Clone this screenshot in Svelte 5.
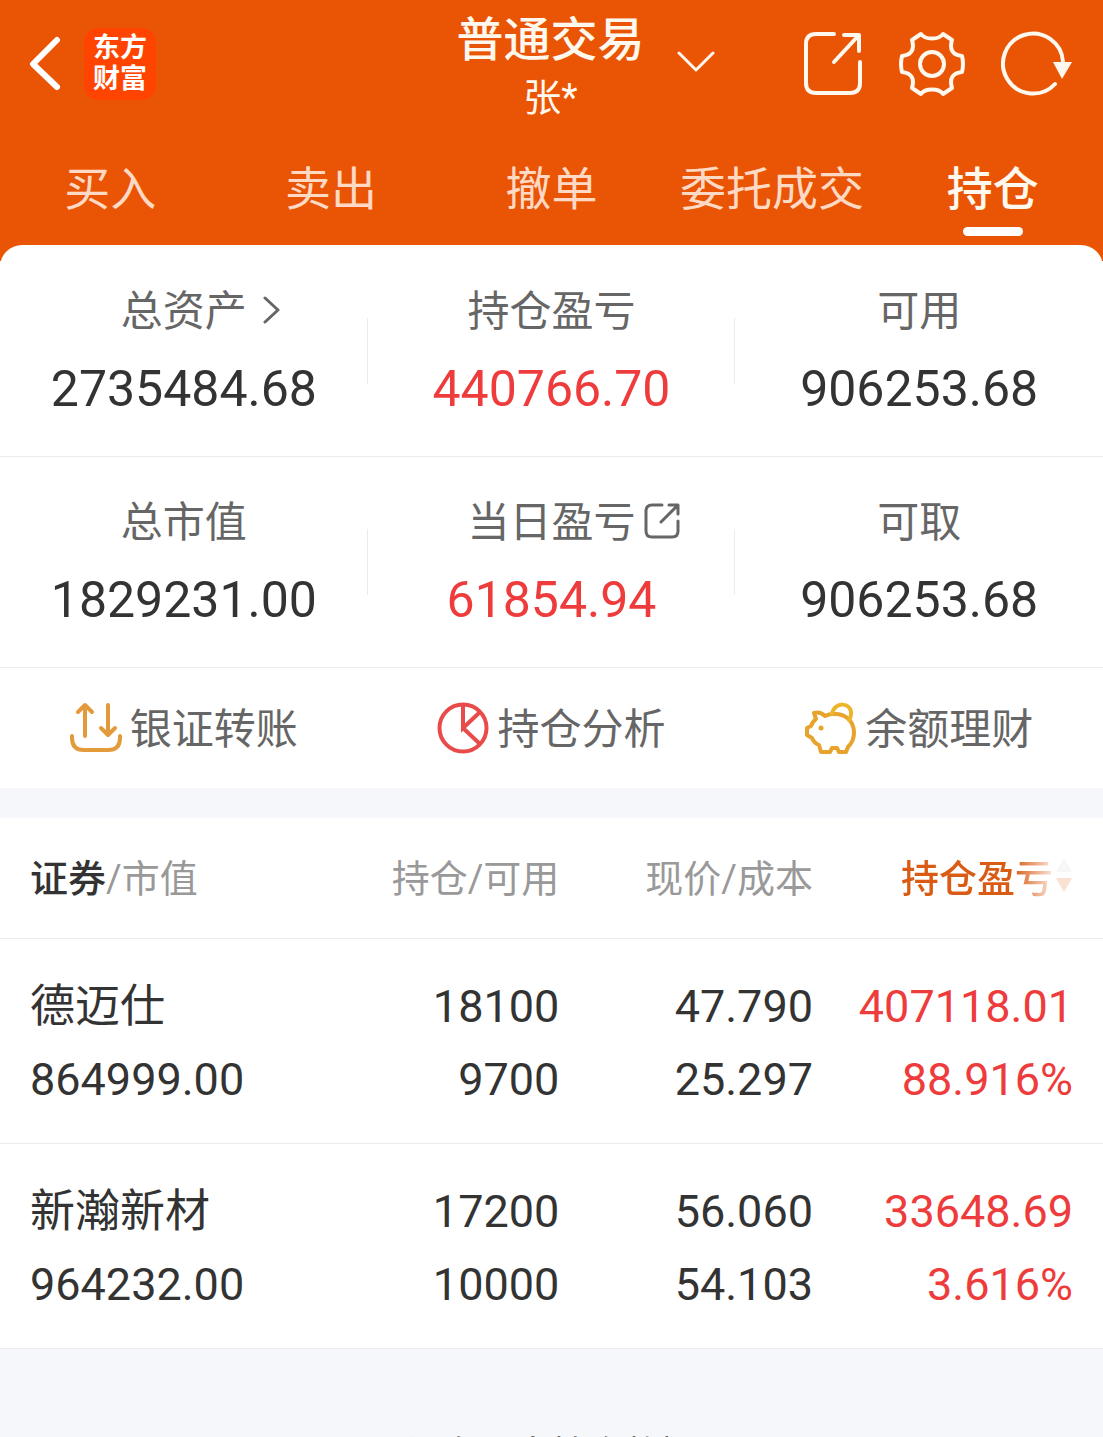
<script lang="ts">
  type Row = { name: string; value: string; held: string; usable: string; price: string; cost: string; profit: string; rate: string };

  const tabs = ['买入', '卖出', '撤单', '委托成交', '持仓'];
  let activeTab = $state('持仓');

  const summary = [
    [
      { label: '总资产', value: '2735484.68', icon: 'chevron', up: false },
      { label: '持仓盈亏', value: '440766.70', icon: '', up: true },
      { label: '可用', value: '906253.68', icon: '', up: false },
    ],
    [
      { label: '总市值', value: '1829231.00', icon: '', up: false },
      { label: '当日盈亏', value: '61854.94', icon: 'share', up: true },
      { label: '可取', value: '906253.68', icon: '', up: false },
    ],
  ];

  const rows: Row[] = [
    { name: '德迈仕', value: '864999.00', held: '18100', usable: '9700', price: '47.790', cost: '25.297', profit: '407118.01', rate: '88.916%' },
    { name: '新瀚新材', value: '964232.00', held: '17200', usable: '10000', price: '56.060', cost: '54.103', profit: '33648.69', rate: '3.616%' },
  ];
</script>

<div class="page">
  <header>
    <div class="bar">
      <div class="left">
        <button class="back" aria-label="返回">
          <svg viewBox="0 0 34 56" fill="none" stroke="#fff" stroke-width="6" stroke-linecap="round" stroke-linejoin="round">
            <path d="M29 4L5 28L29 51" />
          </svg>
        </button>
        <div class="logo"><span>东方</span><span>财富</span></div>
      </div>
      <button class="account">
        <span class="names">
          <span class="title">普通交易</span>
          <span class="user">张*</span>
        </span>
        <svg class="down" viewBox="0 0 38 24" fill="none" stroke="currentColor" stroke-width="3" stroke-linecap="round" stroke-linejoin="round">
          <path d="M2 3L19 20L36 3" />
        </svg>
      </button>
      <div class="tools">
        <button class="share" aria-label="分享">
          <svg viewBox="0 0 60 66" fill="none" stroke="currentColor" stroke-width="4" stroke-linecap="round" stroke-linejoin="round">
            <path d="M31 3H13Q3 3 3 13V52Q3 62 13 62H47Q57 62 57 52V31" />
            <path d="M41 4H56V20M56 4L31 31" />
          </svg>
        </button>
        <button class="gear" aria-label="设置">
          <svg viewBox="-34 -34 68 68" fill="none" stroke="currentColor" stroke-width="4" stroke-linejoin="round">
            <path d="M-11 -30C-7 -24 7 -24 11 -30L20 -24C17 -14 21 -9 30 -8Q32 0 30 8C21 9 17 14 20 24L11 30C7 24 -7 24 -11 30L-20 24C-17 14 -21 9 -30 8Q-32 0 -30 -8C-21 -9 -17 -14 -20 -24Z" />
            <circle r="12" />
          </svg>
        </button>
        <button class="refresh" aria-label="刷新">
          <svg viewBox="0 0 72 66" fill="none" stroke="currentColor" stroke-width="4" stroke-linecap="round">
            <path d="M54 53A30 30 0 1 1 62 31" />
            <path d="M52 31H71L61 48Z" fill="currentColor" stroke="none" />
          </svg>
        </button>
      </div>
    </div>
    <nav>
      {#each tabs as tab}
        <button class:active={tab === activeTab} onclick={() => (activeTab = tab)}>{tab}</button>
      {/each}
    </nav>
  </header>

  <main>
    {#each summary as line}
      <section class="summary">
        {#each line as item}
          <div class="cell">
            <div class="label">
              {item.label}
              {#if item.icon === 'chevron'}
                <svg class="more" viewBox="0 0 18 30" fill="none" stroke="currentColor" stroke-width="3" stroke-linecap="round" stroke-linejoin="round">
                  <path d="M2 3L15 15L2 27" />
                </svg>
              {:else if item.icon === 'share'}
                <svg class="detail" viewBox="0 0 36 36" fill="none" stroke="currentColor" stroke-width="3" stroke-linecap="round" stroke-linejoin="round">
                  <path d="M18 2H8Q2 2 2 8V28Q2 34 8 34H28Q34 34 34 28V18" />
                  <path d="M25 2H34V11M33 3L17 19" />
                </svg>
              {/if}
            </div>
            <div class="value" class:up={item.up}>{item.value}</div>
          </div>
        {/each}
      </section>
    {/each}

    <section class="actions">
      <button>
        <svg viewBox="0 0 52 52" fill="none" stroke="#e39a3b" stroke-width="4" stroke-linecap="round" stroke-linejoin="round">
          <path d="M15 34V3M8 10L15 3L22 10M38 3V32M31 26L38 33L45 26" />
          <path d="M2 34V36Q2 48 14 48H38Q50 48 50 36V34" />
        </svg>
        <span>银证转账</span>
      </button>
      <button>
        <svg viewBox="0 0 52 52" fill="none" stroke="#e94b4b" stroke-width="4">
          <circle cx="26" cy="26" r="23.5" />
          <path d="M26 3V26L43 10M26 26L43 42" />
        </svg>
        <span>持仓分析</span>
      </button>
      <button>
        <svg viewBox="0 0 52 52" fill="none" stroke="#e8a32c" stroke-width="4" stroke-linecap="round" stroke-linejoin="round">
          <path d="M28 12C38 11 49 17 49 31C49 38 46 42 43 45L41 50H34L32 46H27L25 50H16L14 43Q9 41 7 36L2 33V26L6 24Q8 19 11 17L9 11Q15 9 20 14Q24 12 28 12Z" />
          <path d="M27 12C29 -1 47 0 46 12Q46 15 44 18" stroke="#edb52b" />
          <circle cx="16" cy="26" r="2.5" fill="#e8a32c" stroke="none" />
        </svg>
        <span>余额理财</span>
      </button>
    </section>

    <table>
      <thead>
        <tr>
          <th><b>证券</b>/市值</th>
          <th>持仓/可用</th>
          <th>现价/成本</th>
          <th class="sorted">
            <button>
              <span>持仓盈亏</span>
              <svg viewBox="0 0 18 34"><path d="M9 0L17 14H1Z" fill="#f7f7f8" /><path d="M1 20H17L9 34Z" fill="#fbe0d4" /></svg>
            </button>
          </th>
        </tr>
      </thead>
      <tbody>
        {#each rows as row}
          <tr>
            <td><div>{row.name}</div><div>{row.value}</div></td>
            <td><div>{row.held}</div><div>{row.usable}</div></td>
            <td><div>{row.price}</div><div>{row.cost}</div></td>
            <td class="up"><div>{row.profit}</div><div>{row.rate}</div></td>
          </tr>
        {/each}
      </tbody>
    </table>
  </main>

  <footer>没有更多持仓数据</footer>
</div>

<style>
  :global(body) { background: #f6f7fa; }
  .page { height: 100vh; overflow-y: auto; scrollbar-width: none; font-family: Roboto, "Noto Sans CJK SC", sans-serif; color: #333; }
  button { padding: 0; border: 0; background: none; font: inherit; color: inherit; cursor: pointer; }
  svg { display: block; flex: none; }

  header { padding-bottom: 16px; color: #fff8ee; background: #e95504; }
  .bar { display: grid; grid-template-columns: 1fr auto 1fr; align-items: center; height: 128px; padding: 0 30px 0 28px; }
  .left { display: flex; align-items: center; gap: 22px; }
  .back svg { width: 34px; height: 56px; }
  .logo { display: flex; flex-direction: column; justify-content: center; width: 72px; height: 72px; border-radius: 14px; background: #ff4400; color: #fff; font-size: 27px; font-weight: 700; line-height: 31px; text-align: center; }
  .account { position: relative; padding-top: 8px; }
  .names { display: flex; flex-direction: column; align-items: center; }
  .title { font-size: 47px; font-weight: 500; line-height: 60px; }
  .user { font-size: 38px; line-height: 56px; }
  .down { position: absolute; left: 100%; top: 50%; width: 38px; height: 24px; margin: -14px 0 0 32px; }
  .tools { display: flex; justify-content: flex-end; align-items: center; gap: 35px; }
  .share svg { width: 60px; height: 66px; }
  .gear svg { width: 68px; height: 68px; }
  .refresh svg { width: 72px; height: 66px; }

  nav { display: grid; grid-template-columns: repeat(5, 1fr); height: 117px; }
  nav button { display: flex; flex-direction: column; align-items: center; padding-top: 27px; font-size: 46px; line-height: 68px; white-space: nowrap; color: #ffd9c4; }
  nav .active { font-weight: 500; color: #fff8ee; }
  nav .active::after { content: ""; width: 60px; height: 9px; margin-top: 4px; border-radius: 5px; background: #fff; }

  main { margin-top: -16px; padding-top: 1px; background: #fff; border-radius: 22px 22px 0 0; }
  .summary { display: grid; grid-template-columns: repeat(3, 1fr); height: 211px; border-bottom: 1px solid #ebebeb; box-sizing: border-box; }
  .cell { position: relative; display: flex; flex-direction: column; align-items: center; padding-top: 36px; }
  .cell + .cell::before { content: ""; position: absolute; left: -1px; top: 72px; width: 1px; height: 66px; background: #ebebeb; }
  .label { position: relative; font-size: 42px; line-height: 60px; color: #666; }
  .more { position: absolute; left: 100%; top: 13px; width: 18px; height: 30px; margin-left: 16px; }
  .detail { position: absolute; left: 100%; top: 10px; width: 36px; height: 36px; margin-left: 8px; }
  .value { font-size: 50px; line-height: 60px; margin-top: 17px; }
  .up { color: #ee3b3b; }

  .actions { display: grid; grid-template-columns: repeat(3, 1fr); height: 120px; }
  .actions button { display: flex; align-items: center; justify-content: center; gap: 8px; font-size: 42px; line-height: 60px; color: #666; }
  .actions span { padding-top: 4px; }
  .actions svg { width: 52px; height: 52px; }

  table { width: 100%; border-top: 30px solid #f6f7fa; border-collapse: separate; border-spacing: 0; table-layout: fixed; }
  th, td { box-sizing: border-box; padding: 0; border-bottom: 1px solid #ebebeb; text-align: right; }
  th { height: 121px; padding-bottom: 6px; font-size: 38px; font-weight: 400; color: #999; }
  th b { font-weight: 500; color: #333; }
  th:nth-child(1), td:nth-child(1) { width: 27%; padding-left: 30px; text-align: left; }
  th:nth-child(3), td:nth-child(3) { width: 23%; }
  th:nth-child(4), td:nth-child(4) { width: 290px; padding-right: 30px; }
  .sorted button { display: inline-flex; align-items: center; gap: 2px; font-weight: 500; white-space: nowrap; }
  .sorted span { background: linear-gradient(90deg, #d95b14 74%, #fbe6db); background-clip: text; color: transparent; }
  .sorted svg { width: 18px; height: 34px; }
  td { height: 205px; padding-top: 3px; font-size: 45px; line-height: 73px; }

  footer { padding: 80px 0 48px; font-size: 36px; line-height: 52px; text-align: center; color: #666; }
</style>
